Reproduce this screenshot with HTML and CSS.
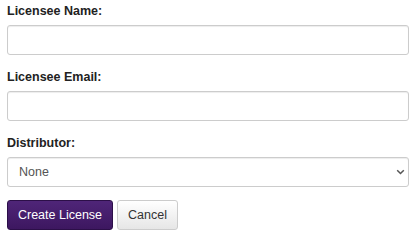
FILE: index.html
```html
<!DOCTYPE html>
<html>
<head>
<meta charset="utf-8">
<link rel="stylesheet" href="styles.css">
</head>
<body>
<form class="form">
  <div class="group">
    <label class="label" for="name">Licensee Name:</label>
    <input class="field" id="name" type="text">
  </div>
  <div class="group">
    <label class="label" for="email">Licensee Email:</label>
    <input class="field" id="email" type="text">
  </div>
  <div class="group">
    <label class="label" for="dist">Distributor:</label>
    <div class="select-wrap">
      <select class="field select" id="dist"><option>None</option></select>
      <svg class="chev" width="9" height="6" viewBox="0 0 9 6"><path d="M1.2 1.2 L4.5 4.5 L7.8 1.2" fill="none" stroke="#555" stroke-width="1.5"/></svg>
    </div>
  </div>
  <div class="actions">
    <button type="button" class="btn btn-primary">Create License</button>
    <button type="button" class="btn btn-default">Cancel</button>
  </div>
</form>
</body>
</html>
```
FILE: styles.css
```css
html, body {
  margin: 0;
  padding: 0;
  background: #fff;
}
body {
  font-family: "Liberation Sans", Arial, sans-serif;
  font-size: 12.5px;
  color: #333;
}
.form {
  padding: 4px 8px 0 7px;
  width: 402px;
}
.group {
  display: flex;
  flex-direction: column;
  margin-bottom: 15px;
}
.group:nth-child(3) {
  margin-bottom: 13px;
}
.label {
  font-weight: bold;
  color: #222;
  font-size: 12.5px;
  line-height: 15px;
  margin-bottom: 6px;
}
.field {
  box-sizing: border-box;
  height: 30px;
  width: 402px;
  border: 1px solid #ccc;
  border-radius: 3px;
  box-shadow: inset 0 1px 1px rgba(0,0,0,0.075);
  font-family: "Liberation Sans", Arial, sans-serif;
  font-size: 12.5px;
  color: #555;
  background: #fff;
  padding: 4px 11px;
  margin: 0;
}
.select-wrap {
  position: relative;
}
.select {
  appearance: none;
  -webkit-appearance: none;
}
.chev {
  position: absolute;
  right: 4px;
  top: 12px;
  pointer-events: none;
}
.actions {
  display: flex;
  gap: 4px;
}
.btn {
  box-sizing: border-box;
  height: 30px;
  border-radius: 3px;
  font-family: "Liberation Sans", Arial, sans-serif;
  font-size: 12.5px;
  padding: 0;
  margin: 0;
  white-space: nowrap;
}
.btn-primary {
  width: 106px;
  background: linear-gradient(#4f2578, #3d1760);
  border: 1px solid #2c0f48;
  color: #fff;
}
.btn-default {
  width: 61px;
  background: linear-gradient(#fff, #e6e6e6);
  border: 1px solid #ccc;
  color: #333;
}
```
